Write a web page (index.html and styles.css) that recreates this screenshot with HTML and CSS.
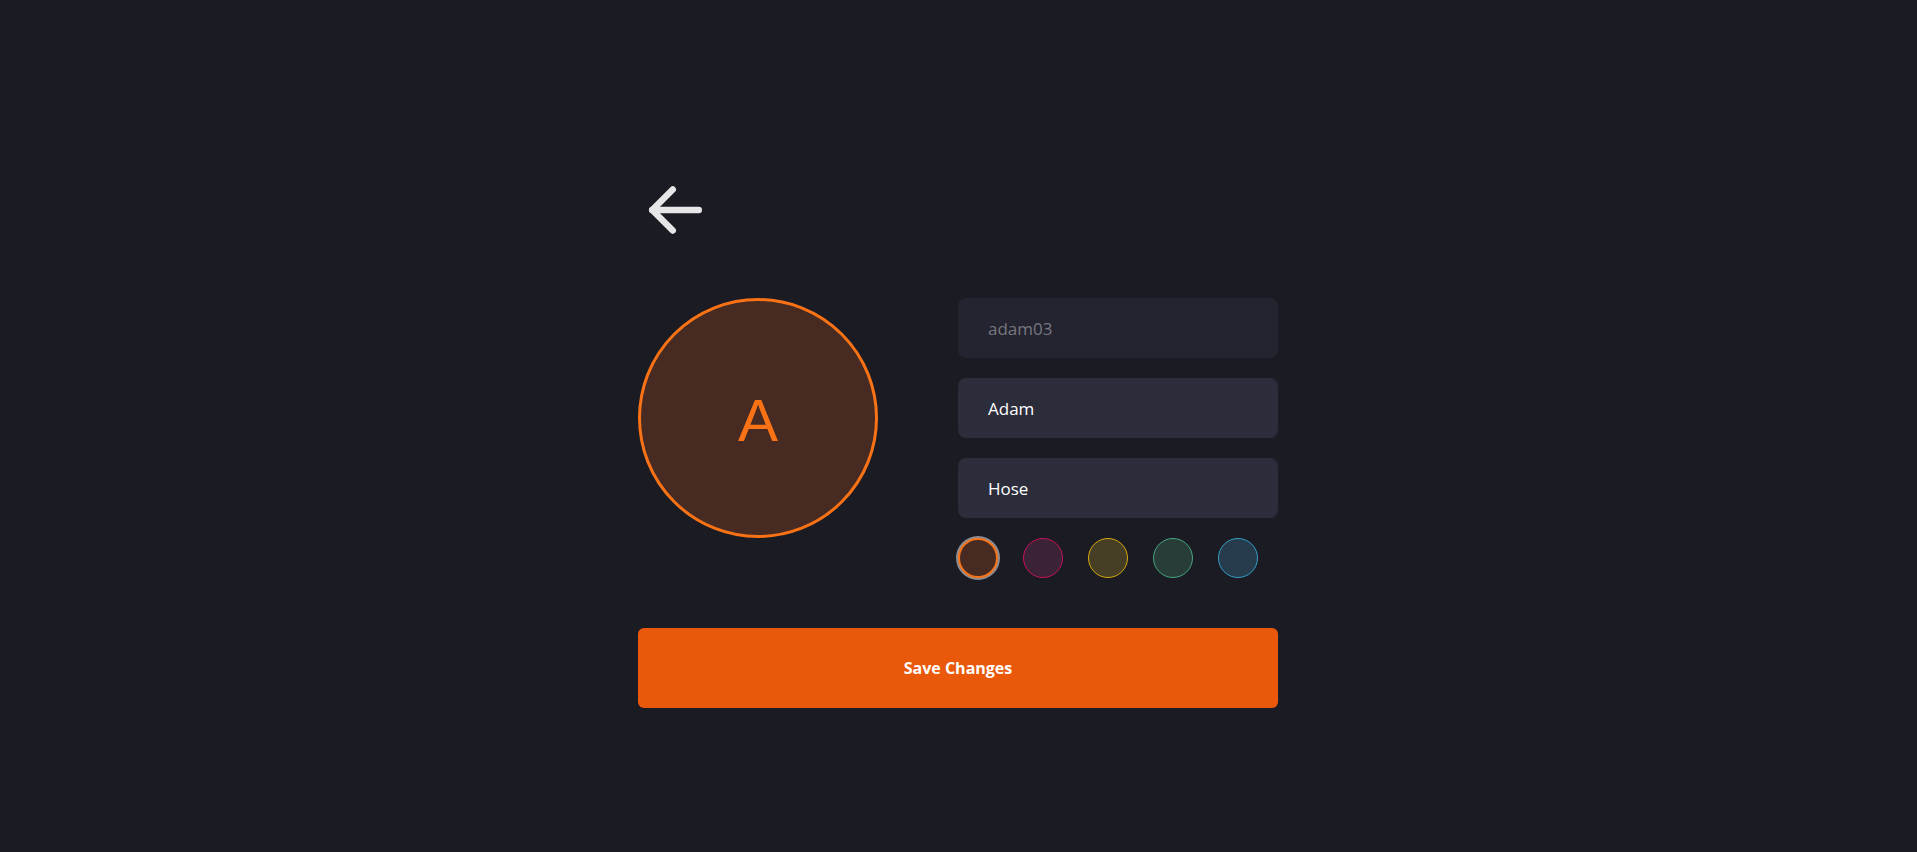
FILE: index.html
```html
<!DOCTYPE html>
<html lang="en">
<head>
<meta charset="utf-8">
<title>Edit Profile</title>
<link rel="stylesheet" href="styles.css">
</head>
<body>
<main class="page">
  <div class="panel">
    <button class="back" type="button" aria-label="Back">
      <svg width="64" height="64" viewBox="0 0 64 64" fill="none" stroke="currentColor" stroke-width="6.5" stroke-linecap="round" stroke-linejoin="round">
        <path d="M60.75 32H14.25"/>
        <path d="M34.75 11.5L14.25 32l20.5 20.5"/>
      </svg>
    </button>
    <div class="profile">
      <div class="avatar">A</div>
      <form class="fields">
        <input class="field field-muted" type="text" value="adam03" readonly>
        <input class="field" type="text" value="Adam">
        <input class="field" type="text" value="Hose">
        <div class="swatches">
          <span class="swatch swatch-orange is-selected"></span>
          <span class="swatch swatch-pink"></span>
          <span class="swatch swatch-yellow"></span>
          <span class="swatch swatch-green"></span>
          <span class="swatch swatch-blue"></span>
        </div>
      </form>
    </div>
    <button class="save" type="button">Save Changes</button>
  </div>
</main>
</body>
</html>
```
FILE: styles.css
```css
* { box-sizing: border-box; }
html, body { margin: 0; height: 100%; }
body {
  background: #1b1b23;
  font-family: "Open Sans", "Noto Sans", "Liberation Sans", sans-serif;
  color: #ffffff;
}
.page {
  min-height: 100vh;
  padding-top: 178px;
  padding-right: 1px;
}
.panel {
  width: 640px;
  margin: 0 auto;
}
.back {
  display: block;
  width: 64px;
  height: 64px;
  padding: 0;
  border: 0;
  background: none;
  color: #e6e6e8;
  cursor: pointer;
}
.back svg { display: block; }
.profile {
  display: flex;
  align-items: flex-start;
  gap: 80px;
  margin-top: 56px;
}
.avatar {
  width: 240px;
  height: 240px;
  flex: none;
  border-radius: 50%;
  border: 3px solid #f97316;
  background: #472a22;
  color: #f97316;
  display: flex;
  align-items: center;
  justify-content: center;
  font-family: "Liberation Sans", "Open Sans", sans-serif;
  font-size: 60px;
  line-height: 1;
  padding-top: 6px;
}
.fields {
  width: 320px;
  display: flex;
  flex-direction: column;
  gap: 20px;
  margin: 0;
}
.field {
  height: 60px;
  width: 100%;
  border: 0;
  border-radius: 8px;
  padding: 0 30px;
  background: #2c2d3b;
  color: #ffffff;
  font-family: inherit;
  font-size: 17px;
  outline: none;
}
.field-muted {
  background: #242430;
  color: #77777f;
}
.swatches {
  display: flex;
  gap: 25px;
}
.swatch {
  width: 40px;
  height: 40px;
  border-radius: 50%;
  border: 1.5px solid;
}
.swatch.is-selected {
  border-width: 2px;
  box-shadow: 0 0 0 2px #8c8c92;
}
.swatch-orange { background: #472a22; border-color: #f97316; }
.swatch-pink { background: #3b2234; border-color: #c8125c; }
.swatch-yellow { background: #463e25; border-color: #d6aa0c; }
.swatch-green { background: #293d38; border-color: #45a580; }
.swatch-blue { background: #263b4b; border-color: #35a0c9; }
.save {
  display: block;
  width: 100%;
  height: 80px;
  margin-top: 50px;
  border: 0;
  border-radius: 6px;
  background: #ea580c;
  color: #ffffff;
  font-family: inherit;
  font-size: 16px;
  font-weight: 700;
  cursor: pointer;
}
```
